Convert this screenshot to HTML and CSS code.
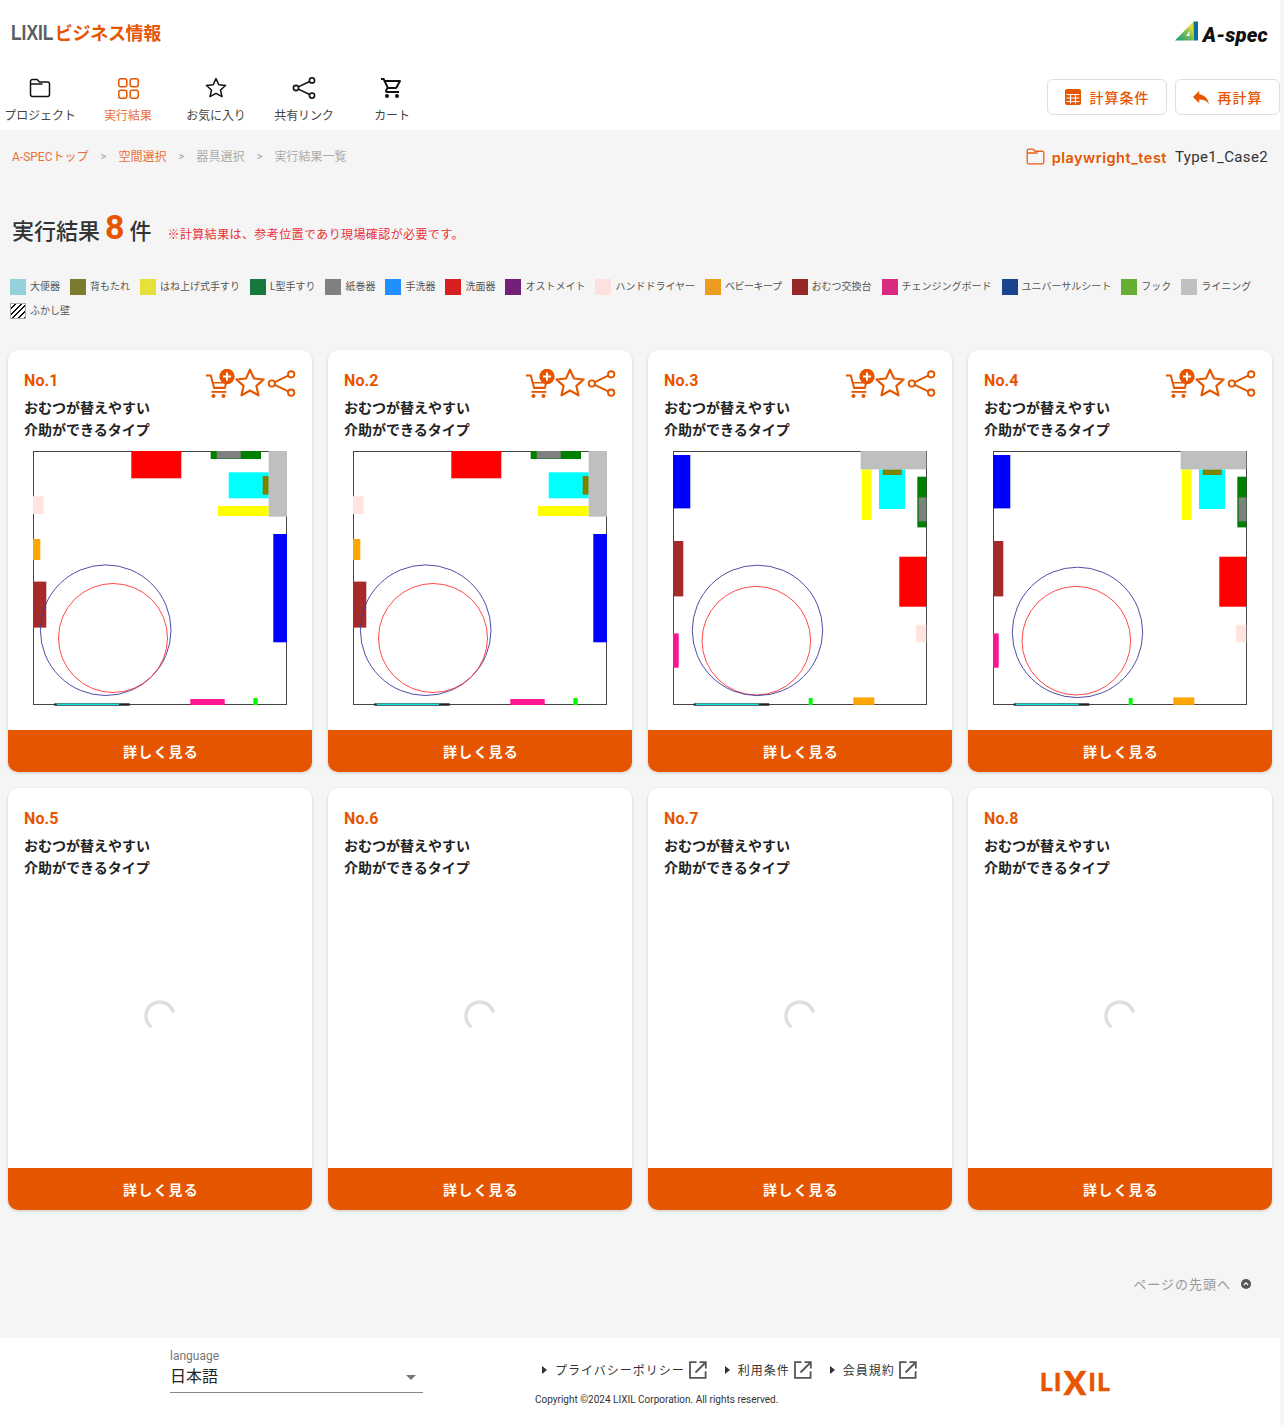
FILE: index.html
```html
<!DOCTYPE html>
<html lang="ja">
<head>
<meta charset="utf-8">
<title>LIXIL ビジネス情報 A-spec</title>
<link rel="stylesheet" href="styles.css">
</head>
<body>
<svg class="defs" width="0" height="0" aria-hidden="true">
  <symbol id="i-cart" viewBox="0 0 24 24"><path d="M15.55 13c.75 0 1.41-.41 1.75-1.03l3.58-6.49c.37-.66-.11-1.48-.87-1.48H5.21l-.94-2H1v2h2l3.6 7.59-1.35 2.44C4.52 15.37 5.48 17 7 17h12v-2H7l1.1-2h7.45zM6.16 6h12.15l-2.76 5H8.53L6.16 6zM7 18c-1.1 0-1.99.9-1.99 2S5.9 22 7 22s2-.9 2-2-.9-2-2-2zm10 0c-1.1 0-1.99.9-1.99 2s.89 2 1.99 2 2-.9 2-2-.9-2-2-2z" fill="currentColor"/></symbol>
  <symbol id="i-star" viewBox="0 0 24 24"><path d="M12 2.6l2.8 6.2 6.8.7-5.1 4.5 1.5 6.7L12 17.3l-6 3.4 1.500-6.700-5.100-4.500 6.800-.7z" fill="none" stroke="currentColor" stroke-width="1.500" stroke-linejoin="round"/></symbol>
  <symbol id="i-share" viewBox="0 0 24 24" fill="none" stroke="currentColor" stroke-width="1.600"><circle cx="4" cy="12" r="2.600"/><circle cx="20" cy="4.400" r="2.600"/><circle cx="20" cy="19.600" r="2.600"/><path d="M6.400 10.900l11.200-5.400M6.400 13.100l11.200 5.400"/></symbol>
  <symbol id="i-folder" viewBox="0 0 24 24"><path d="M2.500 5.500a2 2 0 0 1 2-2h4.600l2.400 2.500h8a2 2 0 0 1 2 2v10.500a2 2 0 0 1-2 2h-15a2 2 0 0 1-2-2z M2.500 8h12" fill="none" stroke="currentColor" stroke-width="1.500" stroke-linejoin="round"/></symbol>
  <symbol id="i-ext" viewBox="0 0 18 18" fill="none" stroke="currentColor" stroke-width="1.800"><path d="M7.500 1.200H1v15.600h15.600v-6.500M10.500 1.200h6.300v6.300M16.500 1.500L6.500 11.500"/></symbol>
  <symbol id="i-cart-add" viewBox="0 0 30 30"><g fill="currentColor"><path d="M0 5.400h5.500l3.400 12.400h9.100l2-6.600h2l-2.600 8.800H7.400L4 7.400H0z"/><rect x="5.400" y="22" width="15" height="1.800"/><circle cx="7.500" cy="27" r="2"/><circle cx="17.500" cy="27" r="2"/><rect x="7" y="13" width="12" height="1.500"/><circle cx="21" cy="7.500" r="7.700"/></g><path d="M21 3.500v8M17 7.500h8" stroke="#fff" stroke-width="2"/></symbol>
  <symbol id="plan-a" viewBox="0 0 254 254">
    <rect x="98.300" y="0" width="50" height="27.300" fill="#f00"/>
    <rect x="177.700" y="0" width="50.300" height="8" fill="#008000"/>
    <rect x="183.700" y="0" width="24" height="7.500" fill="#808080"/>
    <rect x="195.700" y="21.300" width="40" height="26" fill="#0ff"/>
    <rect x="229.700" y="25" width="6" height="18.700" fill="#808000"/>
    <rect x="185" y="55" width="50.700" height="10" fill="#ff0"/>
    <rect x="235.700" y="0" width="18.300" height="65.700" fill="#bfbfbf"/>
    <rect x="0" y="45.300" width="10.500" height="17.700" fill="#ffe4e1"/>
    <rect x="0" y="88" width="7.300" height="21" fill="#ffa500"/>
    <rect x="240.300" y="83" width="13.700" height="108.300" fill="#00f"/>
    <rect x="0" y="130.600" width="13.300" height="46" fill="#a52a2a"/>
    <rect x="157.300" y="248" width="34.400" height="6" fill="#ff1493"/>
    <rect x="220.300" y="247" width="4.400" height="7" fill="#0f0"/>
    <rect x="21.300" y="252.300" width="75.400" height="2.400" fill="#222"/>
    <rect x="23.700" y="252.700" width="62.300" height="1.200" fill="#0ff"/>
    <circle cx="72.700" cy="179.200" r="65.300" fill="none" stroke="#3a3a9e" stroke-width=".9"/>
    <circle cx="80" cy="187" r="54.500" fill="none" stroke="#f33" stroke-width=".9"/>
  </symbol>
  <symbol id="plan-b" viewBox="0 0 254 254">
    <g transform="translate(0 .7)">
      <rect x="0" y="3.300" width="17.300" height="53.400" fill="#00f"/>
      <rect x="206" y="17.700" width="26" height="39.600" fill="#0ff"/>
      <rect x="209.700" y="17.700" width="19" height="5.600" fill="#808000"/>
      <rect x="188.700" y="17.700" width="10" height="50.600" fill="#ff0"/>
      <rect x="187.700" y="-.7" width="65.600" height="18.400" fill="#bfbfbf"/>
      <rect x="244.300" y="25" width="9" height="50.700" fill="#008000"/>
      <rect x="245.700" y="45.700" width="7.600" height="24" fill="#808080"/>
      <rect x="226.300" y="105" width="27" height="50" fill="#f00"/>
      <rect x="243" y="173" width="10.300" height="17.700" fill="#ffe4e1"/>
      <rect x="0" y="89.300" width="10.300" height="55.400" fill="#a52a2a"/>
      <rect x="0" y="181.700" width="5.700" height="34.300" fill="#ff1493"/>
      <rect x="135.700" y="246.300" width="4" height="7" fill="#0f0"/>
      <rect x="180.300" y="245.700" width="21" height="7.500" fill="#ffa500"/>
      <rect x="20.700" y="251.600" width="75.600" height="2.400" fill="#222"/>
      <rect x="22.700" y="252" width="63" height="1.200" fill="#0ff"/>
      <circle cx="83.300" cy="189" r="54.300" fill="none" stroke="#f33" stroke-width=".9"/>
    </g>
  </symbol>
</svg>

<div class="page">
  <header class="topbar">
    <div class="brand-row">
      <div class="brand"><span class="brand-lixil">LIXIL</span><span class="brand-jp">ビジネス情報</span></div>
      <div class="aspec">
        <svg class="aspec-mark" viewBox="0 0 24 20" width="24" height="20"><defs><linearGradient id="am" x1="0" y1="1" x2="1" y2="0"><stop offset="0" stop-color="#0f9a78"/><stop offset=".55" stop-color="#7cc050"/><stop offset=".8" stop-color="#dcd93a"/><stop offset="1" stop-color="#e8dc30"/></linearGradient></defs><path d="M0 19.500L18 1v18.500z" fill="url(#am)"/><path d="M18.500 0.500h4.500v19h-4.500z" fill="#0b6f9a"/><path d="M11 15h3.500v-5z" fill="#fff"/></svg>
        <span class="aspec-text">A-spec</span>
      </div>
    </div>
    <div class="nav-row">
      <nav class="nav">
        <a class="nav-item"><svg class="nav-icon"><use href="#i-folder"/></svg><span>プロジェクト</span></a>
        <a class="nav-item is-active"><svg class="nav-icon" viewBox="0 0 24 24" fill="none" stroke="currentColor" stroke-width="1.500"><rect x="2.800" y="2.800" width="8" height="8" rx="2"/><rect x="14.200" y="2.800" width="8" height="8" rx="2"/><rect x="2.800" y="14.200" width="8" height="8" rx="2"/><rect x="14.200" y="14.200" width="8" height="8" rx="2"/></svg><span>実行結果</span></a>
        <a class="nav-item"><svg class="nav-icon"><use href="#i-star"/></svg><span>お気に入り</span></a>
        <a class="nav-item"><svg class="nav-icon"><use href="#i-share"/></svg><span>共有リンク</span></a>
        <a class="nav-item"><svg class="nav-icon"><use href="#i-cart"/></svg><span>カート</span></a>
      </nav>
      <div class="actions">
        <button class="action action-calc"><svg class="action-icon" viewBox="0 0 16 16"><rect width="16" height="16" rx="2" fill="currentColor"/><path d="M1.500 5.500h13M1.500 9h13M1.500 12.500h13M5.500 5.500v9M10.500 5.500v9" stroke="#fff" stroke-width="1.200"/></svg>計算条件</button>
        <button class="action action-re"><svg class="action-icon" viewBox="3 5 18 14"><path d="M10 9V5l-7 7 7 7v-4.100c5 0 8.500 1.600 11 5.100-1-5-4-10-11-11z" fill="currentColor"/></svg>再計算</button>
      </div>
    </div>
  </header>

  <main class="main">
    <div class="crumb-row">
      <ol class="crumbs">
        <li class="crumb-link">A-SPECトップ</li><li class="crumb-sep">&gt;</li>
        <li class="crumb-link">空間選択</li><li class="crumb-sep">&gt;</li>
        <li>器具選択</li><li class="crumb-sep">&gt;</li>
        <li>実行結果一覧</li>
      </ol>
      <div class="project">
        <svg class="project-icon"><use href="#i-folder"/></svg>
        <span class="project-name">playwright_test</span>
        <span class="project-case">Type1_Case2</span>
      </div>
    </div>

    <div class="title-row">
      <h1 class="title">実行結果<span class="title-count">8</span>件</h1>
      <p class="notice">※計算結果は、参考位置であり現場確認が必要です。</p>
    </div>

    <ul class="legend">
      <li><i class="sw sw-1"></i>大便器</li>
      <li><i class="sw sw-2"></i>背もたれ</li>
      <li><i class="sw sw-3"></i>はね上げ式手すり</li>
      <li><i class="sw sw-4"></i>L型手すり</li>
      <li><i class="sw sw-5"></i>紙巻器</li>
      <li><i class="sw sw-6"></i>手洗器</li>
      <li><i class="sw sw-7"></i>洗面器</li>
      <li><i class="sw sw-8"></i>オストメイト</li>
      <li><i class="sw sw-9"></i>ハンドドライヤー</li>
      <li class="legend-tight"><i class="sw sw-10"></i>ベビーキープ</li>
      <li><i class="sw sw-11"></i>おむつ交換台</li>
      <li><i class="sw sw-12"></i>チェンジングボード</li>
      <li><i class="sw sw-13"></i>ユニバーサルシート</li>
      <li><i class="sw sw-14"></i>フック</li>
      <li><i class="sw sw-15"></i>ライニング</li>
      <li><i class="sw sw-16"></i>ふかし壁</li>
    </ul>

    <section class="cards">
      <article class="card">
        <div class="card-body">
          <div class="card-head"><h2 class="card-no">No.1</h2><div class="card-tools"><svg class="t-cart"><use href="#i-cart-add"/></svg><svg class="t-star"><use href="#i-star"/></svg><svg class="t-share"><use href="#i-share"/></svg></div></div>
          <p class="card-title">おむつが替えやすい<br>介助ができるタイプ</p>
          <div class="plan"><svg class="plan-svg"><use href="#plan-a"/></svg></div>
        </div>
        <a class="card-btn">詳しく見る</a>
      </article>
      <article class="card">
        <div class="card-body">
          <div class="card-head"><h2 class="card-no">No.2</h2><div class="card-tools"><svg class="t-cart"><use href="#i-cart-add"/></svg><svg class="t-star"><use href="#i-star"/></svg><svg class="t-share"><use href="#i-share"/></svg></div></div>
          <p class="card-title">おむつが替えやすい<br>介助ができるタイプ</p>
          <div class="plan"><svg class="plan-svg"><use href="#plan-a"/></svg></div>
        </div>
        <a class="card-btn">詳しく見る</a>
      </article>
      <article class="card">
        <div class="card-body">
          <div class="card-head"><h2 class="card-no">No.3</h2><div class="card-tools"><svg class="t-cart"><use href="#i-cart-add"/></svg><svg class="t-star"><use href="#i-star"/></svg><svg class="t-share"><use href="#i-share"/></svg></div></div>
          <p class="card-title">おむつが替えやすい<br>介助ができるタイプ</p>
          <div class="plan"><svg class="plan-svg" viewBox="0 0 254 254"><use href="#plan-b" width="254" height="254"/><circle cx="84.500" cy="179.400" r="65.200" fill="none" stroke="#3a3a9e" stroke-width=".9"/></svg></div>
        </div>
        <a class="card-btn">詳しく見る</a>
      </article>
      <article class="card">
        <div class="card-body">
          <div class="card-head"><h2 class="card-no">No.4</h2><div class="card-tools"><svg class="t-cart"><use href="#i-cart-add"/></svg><svg class="t-star"><use href="#i-star"/></svg><svg class="t-share"><use href="#i-share"/></svg></div></div>
          <p class="card-title">おむつが替えやすい<br>介助ができるタイプ</p>
          <div class="plan"><svg class="plan-svg" viewBox="0 0 254 254"><use href="#plan-b" width="254" height="254"/><circle cx="84.500" cy="181.400" r="65.200" fill="none" stroke="#3a3a9e" stroke-width=".9"/></svg></div>
        </div>
        <a class="card-btn">詳しく見る</a>
      </article>
      <article class="card">
        <div class="card-body">
          <div class="card-head"><h2 class="card-no">No.5</h2></div>
          <p class="card-title">おむつが替えやすい<br>介助ができるタイプ</p>
          <div class="spin-wrap"><svg class="spinner" viewBox="0 0 32 32"><path d="M6.100 26A14 14 0 1 1 29 11" fill="none" stroke="#dedede" stroke-width="3.500" stroke-linecap="round"/></svg></div>
        </div>
        <a class="card-btn">詳しく見る</a>
      </article>
      <article class="card">
        <div class="card-body">
          <div class="card-head"><h2 class="card-no">No.6</h2></div>
          <p class="card-title">おむつが替えやすい<br>介助ができるタイプ</p>
          <div class="spin-wrap"><svg class="spinner" viewBox="0 0 32 32"><path d="M6.100 26A14 14 0 1 1 29 11" fill="none" stroke="#dedede" stroke-width="3.500" stroke-linecap="round"/></svg></div>
        </div>
        <a class="card-btn">詳しく見る</a>
      </article>
      <article class="card">
        <div class="card-body">
          <div class="card-head"><h2 class="card-no">No.7</h2></div>
          <p class="card-title">おむつが替えやすい<br>介助ができるタイプ</p>
          <div class="spin-wrap"><svg class="spinner" viewBox="0 0 32 32"><path d="M6.100 26A14 14 0 1 1 29 11" fill="none" stroke="#dedede" stroke-width="3.500" stroke-linecap="round"/></svg></div>
        </div>
        <a class="card-btn">詳しく見る</a>
      </article>
      <article class="card">
        <div class="card-body">
          <div class="card-head"><h2 class="card-no">No.8</h2></div>
          <p class="card-title">おむつが替えやすい<br>介助ができるタイプ</p>
          <div class="spin-wrap"><svg class="spinner" viewBox="0 0 32 32"><path d="M6.100 26A14 14 0 1 1 29 11" fill="none" stroke="#dedede" stroke-width="3.500" stroke-linecap="round"/></svg></div>
        </div>
        <a class="card-btn">詳しく見る</a>
      </article>
    </section>

    <div class="to-top"><span>ページの先頭へ</span><svg class="to-top-icon" viewBox="0 0 10 10"><circle cx="5" cy="5" r="5" fill="#555"/><path d="M2.800 6l2.200-2.200L7.200 6" fill="none" stroke="#fff" stroke-width="1.200"/></svg></div>
  </main>

  <footer class="footer">
    <div class="lang">
      <span class="lang-label">language</span>
      <div class="lang-select"><span>日本語</span><i class="lang-caret"></i></div>
    </div>
    <div class="foot-mid">
      <ul class="foot-links">
        <li><i class="tri"></i>プライバシーポリシー<svg class="ext"><use href="#i-ext"/></svg></li>
        <li><i class="tri"></i>利用条件<svg class="ext"><use href="#i-ext"/></svg></li>
        <li><i class="tri"></i>会員規約<svg class="ext"><use href="#i-ext"/></svg></li>
      </ul>
      <p class="copyright">Copyright ©2024 LIXIL Corporation. All rights reserved.</p>
    </div>
    <div class="foot-logo">L<span class="foot-logo-i">I</span><span class="foot-logo-x">X</span><span class="foot-logo-i">I</span>L</div>
  </footer>
</div>
</body>
</html>
```
FILE: styles.css
```css
* { box-sizing: border-box; }
html, body { margin: 0; padding: 0; }
body {
  background: #f5f5f5;
  color: #333;
  font-family: Roboto, "Noto Sans CJK JP", sans-serif;
}
.defs { display: block; height: 0; width: 0; }
symbol { overflow: visible; }
.page { width: 1280px; }
h1, h2, p, ul, ol { margin: 0; padding: 0; }
ul, ol { list-style: none; }

/* header */
.topbar { background: #fff; height: 130px; }
.brand-row {
  display: flex;
  justify-content: space-between;
  padding: 19px 12px 0 11px;
  height: 76px;
}
.brand { display: flex; align-items: baseline; font-weight: 700; font-size: 18px; line-height: 26px; height: 26px; }
.brand-lixil { display: inline-block; font-family: "Liberation Sans", sans-serif; color: #5a5e62; font-size: 22px; transform: scaleX(.79); transform-origin: left center; margin-right: -10px; }
.brand-jp { color: #e65500; font-family: "Noto Sans CJK JP", sans-serif; letter-spacing: -.3px; }
.aspec { display: flex; align-items: flex-start; gap: 4px; padding-top: 2px; }
.aspec-mark { display: block; }
.aspec-text { color: #111; font: italic 900 20.2px/24px Roboto, sans-serif; letter-spacing: .2px; margin-top: 2px; }
.nav-row { display: flex; justify-content: space-between; }
.nav { display: flex; gap: 8px; }
.nav-item { width: 80px; display: flex; flex-direction: column; align-items: center; font-size: 12px; line-height: 16px; color: #444; font-family: "Noto Sans CJK JP", sans-serif; }
.nav-item span { margin-top: 7px; white-space: nowrap; letter-spacing: -.1px; }
.nav-item.is-active { color: #e8703a; }
.nav-item.is-active .nav-icon { color: #e65500; }
.nav-icon { width: 24px; height: 24px; color: #111; display: block; }
.actions { display: flex; gap: 8px; padding-top: 3px; }
.action {
  display: flex; align-items: center; justify-content: center; gap: 9px;
  height: 36px; background: #fff; border: 1px solid #dedede; border-radius: 6px;
  color: #e65500; font-family: "Noto Sans CJK JP", sans-serif; font-size: 14px; font-weight: 500; letter-spacing: 1px;
  padding: 0;
}
.action-calc { width: 120px; }
.action-re { width: 105px; }
.action-icon { width: 16px; height: 16px; display: block; }

/* breadcrumb */
.crumb-row { display: flex; justify-content: space-between; align-items: center; height: 52px; padding: 1px 12px 0 12px; }
.crumbs { display: flex; font-size: 12px; color: #aaa; font-family: Roboto, "Noto Sans CJK JP", sans-serif; line-height: 16px; }
.crumb-link { color: #e8703a; }
.crumb-sep { width: 30px; text-align: center; color: #999; font-size: 11px; }
.project { display: flex; align-items: center; font-size: 15px; }
.project-icon { width: 21px; height: 21px; color: #e8601a; margin-right: 6px; display: block; margin-top: -1px; }
.project-name { color: #e65500; font-weight: 600; letter-spacing: .5px; font-family: Inter, Roboto, sans-serif; font-size: 14.5px; margin-top: 1px; }
.project-case { color: #333; margin-left: 8px; letter-spacing: .35px; margin-top: 1px; }

/* title */
.title-row { display: flex; align-items: center; padding: 20px 12px 0; height: 74px; }
.title { font-size: 22px; font-weight: 500; line-height: 36px; color: #333; display: flex; align-items: center; font-family: "Noto Sans CJK JP", sans-serif; }
.title-count { font-family: Roboto, sans-serif; font-size: 34px; color: #e65500; font-weight: 700; margin: -4px 5px 0; }
.notice { margin-left: 16px; font-size: 12px; letter-spacing: .4px; color: #e8303a; padding-top: 9px; font-family: "Noto Sans CJK JP", sans-serif; }

/* legend */
.legend { display: flex; flex-wrap: wrap; gap: 8px 10px; padding: 23px 10px 0; font-size: 10px; line-height: 16px; color: #555; font-family: Roboto, "Noto Sans CJK JP", sans-serif; }
.legend li { display: flex; align-items: center; gap: 4px; height: 16px; white-space: nowrap; }
.legend-tight { letter-spacing: -.5px; }
.sw { width: 16px; height: 16px; display: block; }
.sw-1 { background: #95d0db; }
.sw-2 { background: #7a7b2c; }
.sw-3 { background: #e8e03a; }
.sw-4 { background: #16793d; }
.sw-5 { background: #808080; }
.sw-6 { background: #2090ff; }
.sw-7 { background: #d92020; }
.sw-8 { background: #741f78; }
.sw-9 { background: #fde0e0; }
.sw-10 { background: #ee9c20; }
.sw-11 { background: #982828; }
.sw-12 { background: #d92a80; }
.sw-13 { background: #1a4390; }
.sw-14 { background: #66ae30; }
.sw-15 { background: #c0c0c0; }
.sw-16 { border: 1px solid #aaa; background: repeating-linear-gradient(135deg, #fff 0 2.500px, #111 2.500px 4px); }

/* cards */
.cards { display: grid; grid-template-columns: repeat(4, 304px); gap: 16px; padding: 31px 8px 0; }
.card { height: 422px; background: #fff; border-radius: 10px; overflow: hidden; display: flex; flex-direction: column; box-shadow: 0 1px 3px rgba(0,0,0,.18); }
.card-body { flex: 1; padding: 19px 16px 0; display: flex; flex-direction: column; }
.card-head { display: flex; justify-content: space-between; height: 24px; align-items: flex-start; position: relative; }
.card-no { font-size: 16px; font-weight: 700; color: #e65500; line-height: 24px; letter-spacing: .1px; }
.card-tools { display: flex; position: absolute; right: 0; top: 0; color: #e65500; }
.t-cart { width: 30px; height: 30px; margin-right: -3px; display: block; }
.t-star { width: 34px; height: 34px; margin-top: -3px; display: block; }
.t-share { width: 29px; height: 29px; display: block; }
.card-title { font-size: 14px; font-weight: 700; line-height: 22px; color: #222; margin-top: 3px; font-family: "Noto Sans CJK JP", sans-serif; }
.plan { align-self: center; width: 254px; height: 254px; margin-top: 11px; border: 1px solid #444; position: relative; overflow: visible; }
.plan-svg { position: absolute; left: -1px; top: -1px; width: 254px; height: 254px; display: block; overflow: visible; }
.spin-wrap { flex: 1; display: flex; justify-content: center; padding-top: 122px; }
.spinner { width: 32px; height: 32px; display: block; }
.card-btn { height: 42px; background: #e65500; color: #fff; display: flex; align-items: center; justify-content: center; padding-left: 2px; font-size: 14px; font-weight: 700; letter-spacing: 1.2px; font-family: "Noto Sans CJK JP", sans-serif; }

/* to top */
.to-top { display: flex; justify-content: flex-end; align-items: flex-start; gap: 10px; padding: 65px 29px 0 0; height: 128px; font-size: 13px; letter-spacing: 1px; color: #999; font-family: "Noto Sans CJK JP", sans-serif; line-height: 18px; }
.to-top-icon { width: 10px; height: 10px; display: block; margin-top: 4px; }

/* footer */
.footer { background: #fff; height: 87px; display: flex; position: relative; padding-left: 170px; }
.lang { width: 253px; padding-top: 11px; }
.lang-label { display: block; font-size: 12px; line-height: 14px; color: #777; }
.lang-select { display: flex; justify-content: space-between; align-items: flex-start; height: 30px; border-bottom: 1px solid #888; font-size: 16px; line-height: 24px; color: #222; font-family: "Noto Sans CJK JP", sans-serif; padding-right: 7px; }
.lang-caret { width: 0; height: 0; border-left: 5px solid transparent; border-right: 5px solid transparent; border-top: 5px solid #777; margin-top: 12px; }
.foot-mid { margin-left: 112px; width: 400px; padding-top: 22px; }
.foot-links { display: flex; padding-left: 7px; font-size: 12px; letter-spacing: 1px; color: #333; line-height: 20px; font-family: "Noto Sans CJK JP", sans-serif; }
.foot-links li { display: flex; align-items: center; margin-right: 18px; white-space: nowrap; }
.tri { width: 0; height: 0; border-left: 5px solid #333; border-top: 4px solid transparent; border-bottom: 4px solid transparent; margin-right: 8px; }
.ext { width: 18px; height: 18px; color: #555; margin-left: 4px; display: block; }
.copyright { font-size: 10px; line-height: 14px; color: #333; margin-top: 13px; }
.foot-logo { position: absolute; left: 1040px; top: 26px; display: flex; align-items: center; height: 36px; color: #e65500; font-family: Lato, Roboto, sans-serif; font-weight: 900; font-size: 24px; letter-spacing: 1.4px; line-height: 36px; -webkit-text-stroke: .5px #e65500; }
.foot-logo-x { font-size: 33px; margin: 0 1px; }
```
